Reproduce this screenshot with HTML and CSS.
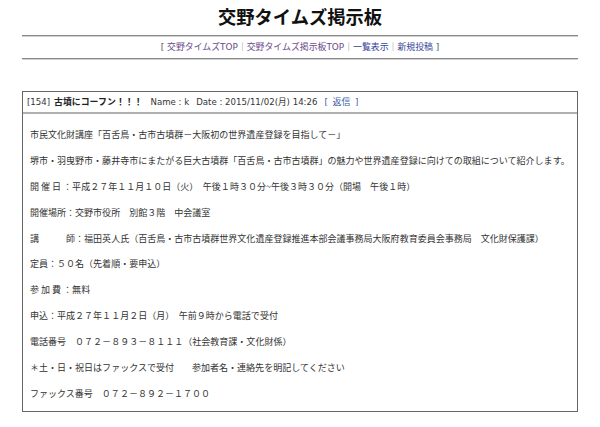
FILE: index.html
```html
<!DOCTYPE html>
<html lang="ja">
<head>
<meta charset="utf-8">
<title>交野タイムズ掲示板</title>
<link rel="stylesheet" href="styles.css">
</head>
<body>
<div class="page">
  <h1 class="title">交野タイムズ掲示板</h1>
  <hr class="rule">
  <nav class="nav">[ <a class="visited" href="#">交野タイムズTOP</a><span class="sep">｜</span><a class="visited" href="#">交野タイムズ掲示板TOP</a><span class="sep">｜</span><a href="#">一覧表示</a><span class="sep">｜</span><a href="#">新規投稿</a> ]</nav>
  <hr class="rule">
  <div class="post">
    <div class="post-head"><span class="num">[154]</span><b class="subject">古墳にコーフン！！！</b><span class="name">Name : k</span><span class="date">Date : 2015/11/02(月) 14:26</span><span class="reply">[ <a href="#">返信</a> ]</span></div>
    <div class="post-body">
      <p>市民文化財講座「百舌鳥・古市古墳群－大阪初の世界遺産登録を目指して－」</p>
      <p>堺市・羽曳野市・藤井寺市にまたがる巨大古墳群「百舌鳥・古市古墳群」の魅力や世界遺産登録に向けての取組について紹介します。</p>
      <p>開 催 日 ：平成２７年１１月１０日（火）　午後１時３０分~午後３時３０分（開場　午後１時）</p>
      <p>開催場所：交野市役所　別館３階　中会議室</p>
      <p>講　　　師：福田英人氏（百舌鳥・古市古墳群世界文化遺産登録推進本部会議事務局大阪府教育委員会事務局　文化財保護課）</p>
      <p>定員：５０名（先着順・要申込）</p>
      <p>参 加 費 ：無料</p>
      <p>申込：平成２７年１１月２日（月）　午前９時から電話で受付</p>
      <p>電話番号　０７２－８９３－８１１１（社会教育課・文化財係）</p>
      <p>＊土・日・祝日はファックスで受付　　参加者名・連絡先を明記してください</p>
      <p>ファックス番号　０７２－８９２－１７００</p>
    </div>
  </div>
</div>
</body>
</html>
```
FILE: styles.css
```css
html, body {
  margin: 0;
  padding: 0;
  background: #ffffff;
}
body {
  font-family: "Noto Sans CJK JP", "Noto Sans", sans-serif;
  color: #333333;
}
.page {
  padding: 0 22px;
}
.title {
  margin: 0;
  padding-top: 4px;
  font-size: 18.3px;
  line-height: 24px;
  font-weight: bold;
  color: #111111;
  text-align: center;
}
.rule {
  margin: 7px 0 0;
  height: 0;
  border: 0;
  border-top: 1px solid #8a8a8a;
  border-bottom: 1px solid #d0d0d0;
}
.nav + .rule {
  margin-top: 0;
}
.nav {
  font-family: "DejaVu Sans", "Noto Sans CJK JP", sans-serif;
  font-size: 8.9px;
  line-height: 21px;
  text-align: center;
  color: #555555;
}
.nav a {
  color: #33449a;
  text-decoration: none;
}
.nav a.visited {
  color: #6a4a8c;
}
.sep {
  color: #888888;
}
.post {
  margin-top: 31px;
  border: 1px solid #666666;
}
.post-head {
  display: flex;
  align-items: center;
  height: 20px;
  line-height: 20px;
  padding-left: 4px;
  font-family: "DejaVu Sans", "Noto Sans CJK JP", sans-serif;
  font-size: 8.6px;
  border-bottom: 2px solid #b0b0b0;
  color: #333333;
  white-space: pre;
}
.num {
  margin-right: 4px;
}
.subject {
  font-family: "Noto Sans CJK JP", sans-serif;
  font-size: 8.9px;
  font-weight: bold;
  color: #222222;
}
.name {
  margin-left: 8px;
}
.date {
  margin-left: 7px;
}
.reply {
  margin-left: 7px;
  word-spacing: 2px;
}
.reply, .reply a {
  color: #3d5aa6;
  text-decoration: none;
}
.reply a {
  font-family: "Noto Sans CJK JP", sans-serif;
  font-size: 8.9px;
}
.post-body {
  display: flex;
  flex-direction: column;
  gap: 12.9px;
  padding: 14px 7px 11px;
  font-size: 9.03px;
  line-height: 13px;
}
.post-body p {
  margin: 0;
  white-space: nowrap;
}
```
